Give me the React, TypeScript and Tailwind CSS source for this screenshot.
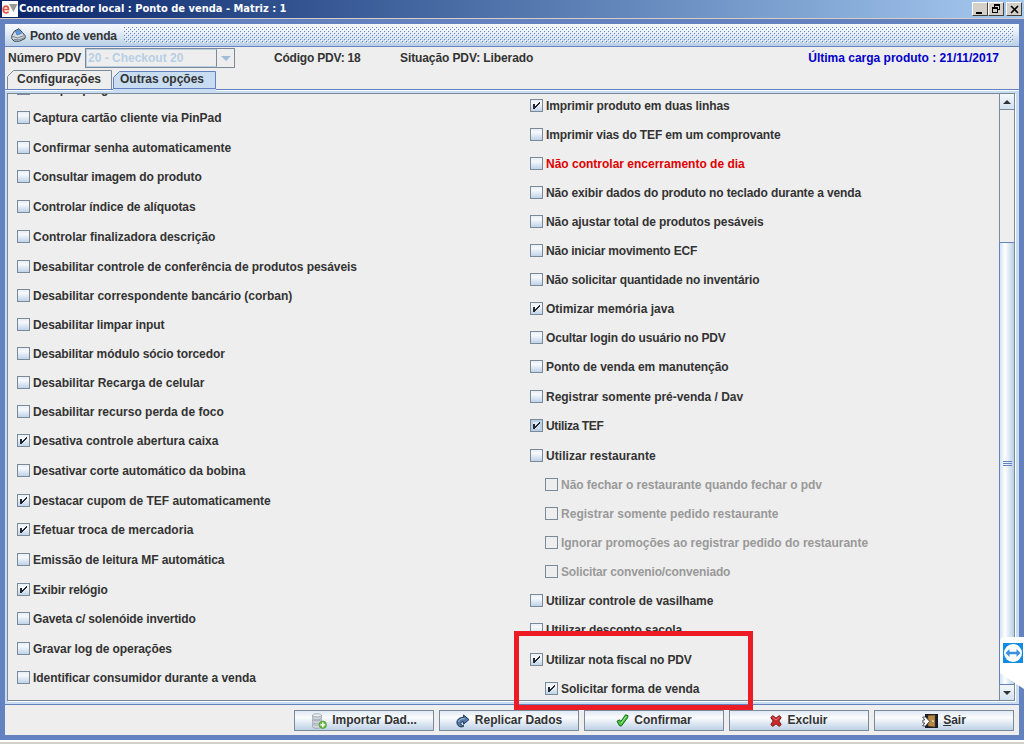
import React from 'react';

type Option = { label: string; h: 29 | 30; on?: boolean; off?: boolean; red?: boolean; sub?: boolean; hot?: boolean; track?: string };

const left: Option[] = [
  { label: 'Compor pergunta', h: 29, track: 'leading-[12px]' },
  { label: 'Captura cartão cliente via PinPad', h: 30, track: 'tracking-[-0.05px]' },
  { label: 'Confirmar senha automaticamente', h: 29, track: 'tracking-[0.03px]' },
  { label: 'Consultar imagem do produto', h: 30, track: 'tracking-[-0.1px]' },
  { label: 'Controlar índice de alíquotas', h: 30, track: 'tracking-[-0.1px]' },
  { label: 'Controlar finalizadora descrição', h: 30, track: 'tracking-[-0.03px]' },
  { label: 'Desabilitar controle de conferência de produtos pesáveis', h: 29, track: 'tracking-[-0.05px]' },
  { label: 'Desabilitar correspondente bancário (corban)', h: 29, track: 'tracking-[-0.02px]' },
  { label: 'Desabilitar limpar input', h: 29, track: 'tracking-[-0.08px]' },
  { label: 'Desabilitar módulo sócio torcedor', h: 29, track: 'tracking-[-0.09px]' },
  { label: 'Desabilitar Recarga de celular', h: 29 },
  { label: 'Desabilitar recurso perda de foco', h: 29 },
  { label: 'Desativa controle abertura caixa', h: 30, on: true, track: 'tracking-[0.02px]' },
  { label: 'Desativar corte automático da bobina', h: 30, track: 'tracking-[-0.05px]' },
  { label: 'Destacar cupom de TEF automaticamente', h: 29, on: true, track: 'tracking-[-0.03px]' },
  { label: 'Efetuar troca de mercadoria', h: 30, on: true, track: 'tracking-[0.04px]' },
  { label: 'Emissão de leitura MF automática', h: 30, track: 'tracking-[-0.06px]' },
  { label: 'Exibir relógio', h: 29, on: true, track: 'tracking-[-0.15px]' },
  { label: 'Gaveta c/ solenóide invertido', h: 30, track: 'tracking-[-0.14px]' },
  { label: 'Gravar log de operações', h: 29, track: 'tracking-[-0.08px]' },
  { label: 'Identificar consumidor durante a venda', h: 29, track: 'tracking-[-0.05px]' },
];

const right: Option[] = [
  { label: 'Imprimir produto em duas linhas', h: 29, on: true, track: 'tracking-[-0.1px]' },
  { label: 'Imprimir vias do TEF em um comprovante', h: 29, track: 'tracking-[-0.13px]' },
  { label: 'Não controlar encerramento de dia', h: 29, red: true },
  { label: 'Não exibir dados do produto no teclado durante a venda', h: 29, track: 'tracking-[-0.13px]' },
  { label: 'Não ajustar total de produtos pesáveis', h: 29, track: 'tracking-[-0.08px]' },
  { label: 'Não iniciar movimento ECF', h: 29, track: 'tracking-[-0.2px]' },
  { label: 'Não solicitar quantidade no inventário', h: 29, track: 'tracking-[-0.12px]' },
  { label: 'Otimizar memória java', h: 29, on: true },
  { label: 'Ocultar login do usuário no PDV', h: 29, track: 'tracking-[-0.16px]' },
  { label: 'Ponto de venda em manutenção', h: 30, track: 'tracking-[-0.05px]' },
  { label: 'Registrar somente pré-venda / Dav', h: 29, track: 'tracking-[-0.03px]' },
  { label: 'Utiliza TEF', h: 30, on: true, hot: true, track: 'tracking-[-0.35px]' },
  { label: 'Utilizar restaurante', h: 29, track: 'tracking-[0.05px]' },
  { label: 'Não fechar o restaurante quando fechar o pdv', h: 29, off: true, sub: true, track: 'tracking-[-0.04px]' },
  { label: 'Registrar somente pedido restaurante', h: 29, off: true, sub: true, track: 'tracking-[0.02px]' },
  { label: 'Ignorar promoções ao registrar pedido do restaurante', h: 29, off: true, sub: true, track: 'tracking-[-0.02px]' },
  { label: 'Solicitar convenio/conveniado', h: 29, off: true, sub: true, track: 'tracking-[-0.14px]' },
  { label: 'Utilizar controle de vasilhame', h: 29, track: 'tracking-[-0.07px]' },
  { label: 'Utilizar desconto sacola', h: 30, track: 'tracking-[-0.05px]' },
  { label: 'Utilizar nota fiscal no PDV', h: 29, on: true, track: 'tracking-[-0.11px]' },
  { label: 'Solicitar forma de venda', h: 29, on: true, sub: true, track: 'tracking-[-0.04px]' },
];

function Check({ on, off, hot }: Option) {
  const fill = off
    ? 'bg-[#eeeeee]'
    : hot
      ? 'bg-linear-to-b from-[#e4eef8] to-[#c3d6ea] shadow-[inset_0_0_0_2px_#b8cfe5]'
      : 'bg-linear-to-b from-[#e6eef7] via-[#f6f9fc] via-30% to-[#bfd3e8]';
  return (
    <span className={`block h-[13px] w-[13px] shrink-0 border border-[#7a8a99] ${fill}`}>
      {on && (
        <svg width="11" height="11" viewBox="0 0 11 11" shapeRendering="crispEdges">
          <path d="M2 4h2v5H2z M4 6h1v2H4z M5 5h1v2H5z M6 4h1v2H6z M7 3h1v2H7z M8 2h1v2H8z" fill="#26292f" />
        </svg>
      )}
    </span>
  );
}

function Row(o: Option) {
  return (
    <div className={`flex items-start gap-[3px] ${o.h === 30 ? 'h-[30px]' : 'h-[29px]'} ${o.sub ? 'pl-[15px]' : ''}`}>
      <Check {...o} />
      <span className={`leading-[15px] whitespace-nowrap ${o.track ?? ''} ${o.red ? 'text-[#e00000]' : o.off ? 'text-[#999999]' : ''}`}>{o.label}</span>
    </div>
  );
}

function Button({ children }: { children: React.ReactNode }) {
  return (
    <button className="flex h-[21px] w-[140px] items-center justify-center gap-[5px] border border-[#7a8a99] bg-linear-to-b from-[#dfe9f4] via-[#fbfcfe] via-35% to-[#bdd1e6] leading-[19px] font-bold">
      {children}
    </button>
  );
}

const DatabaseIcon = () => (
  <svg width="16" height="16" viewBox="0 0 16 16">
    <g fill="#cfd5da" stroke="#8d99a3" strokeWidth="0.7">
      <path d="M1.5 10.5v3c0 2.6 9 2.6 9 0v-3z" />
      <ellipse cx="6" cy="10.5" rx="4.5" ry="1.5" fill="#eef1f3" />
      <path d="M1.5 6.5v2.5c0 2.4 9 2.4 9 0V6.5z" />
      <ellipse cx="6" cy="6.3" rx="4.5" ry="1.5" fill="#eef1f3" />
      <path d="M1.5 2.5v2.500c0 2.400 9 2.400 9 0V2.500z" />
      <ellipse cx="6" cy="2.3" rx="4.5" ry="1.6" fill="#eef1f3" />
    </g>
    <circle cx="11.800" cy="11.800" r="3.700" fill="#6cba45" stroke="#4a9a2a" strokeWidth="0.7" />
    <path d="M11.800 9.400v4.800M9.400 11.800h4.800" stroke="#fff" strokeWidth="1.500" />
  </svg>
);

const RedoIcon = () => (
  <svg width="14" height="14" viewBox="0 0 14 14">
    <path d="M7.600 1l5.400 4.600-5.400 4.600V7.700C5.200 7.800 4.300 9 5 10.300c.5 1 1.700 1.500 3 1.500-.8 1-2.500 1.500-4.200.8C1 11.500.3 8.500 1.500 6.200 2.600 4.200 4.800 3.300 7.600 3.300z" fill="#5379a8" stroke="#1f3552" />
    <path d="M2.600 8c.6-2.500 2.500-3.400 6-3.300" fill="none" stroke="#a9c4e4" />
  </svg>
);

const ConfirmIcon = () => (
  <svg width="13" height="13" viewBox="0 0 13 13">
    <path d="M1 7.300l2.600-1.500 1.300 1.700L9.500.8l2.500.8-.3 2L5.200 12.200 3.400 11.500z" fill="#43c63c" stroke="#17651a" strokeLinejoin="round" />
    <path d="M4.800 9.500L10.300 2.300" stroke="#a5f09a" />
  </svg>
);

const DeleteIcon = () => (
  <svg width="12" height="12" viewBox="0 0 12 12">
    <path d="M.8 2.500L2.800.6 6 3.200 9.200.6l2 1.900L8.800 6l2.400 3.500-2 1.900L6 8.800l-3.200 2.600-2-1.900L3.200 6z" fill="#cf2a2a" stroke="#741010" strokeLinejoin="round" />
    <path d="M2.600 2.300L6 5 9.300 2.300" fill="none" stroke="#ee7777" />
  </svg>
);

const ExitIcon = () => (
  <svg width="16" height="14" viewBox="0 0 16 14">
    <path d="M3 0h13v14H3z" fill="#151c2c" />
    <path d="M6 1.500l7-.5v12l-7-1z" fill="#b98a45" stroke="#6b4818" strokeWidth=".6" />
    <path d="M10 7h2" stroke="#fff" />
    <path d="M.6 3h3L7.600 7.300 3.600 12H.6L2.800 9H.9V6h1.900z" fill="#fff" stroke="#333" strokeWidth=".8" />
  </svg>
);

const PosIcon = () => (
  <svg width="15" height="14" viewBox="0 0 15 14">
    <path d="M3.500 3L8 .7l3.500 3.800 2.700 3.300-.2 2.700-5.500 2.700H3L.8 10.500V7.700z" fill="#d3dbe2" stroke="#35404b" />
    <path d="M4.500 3.500L8 2l2.700 3.300L6 7z" fill="#5b9ae8" stroke="#2d5f9e" strokeWidth=".6" />
    <path d="M1.500 8.300l5 1.700 6.500-2.300M3 11.500l5 .3 5-2" fill="none" stroke="#78838d" />
  </svg>
);

const winBtn = 'flex h-[14px] w-[16px] items-center justify-center border border-t-white border-l-white border-r-[#404040] border-b-[#404040] bg-[#d4d0c8]';
const arrowBox = 'flex shrink-0 items-center justify-center bg-linear-to-b from-[#f4f8fc] to-[#d3e1ef]';

export default function App() {
  return (
    <div className="relative flex h-[754px] w-[1024px] flex-col overflow-hidden bg-white font-['Liberation_Sans',Arial,sans-serif] text-[12px] font-bold text-[#333333]">
      <header className="flex h-[18px] shrink-0 items-center bg-linear-to-r from-[#0a246a] to-[#a6caf0] px-[2px] text-white">
        <svg width="16" height="16" viewBox="0 0 16 16">
          <path d="M0 0h16v16H0z" fill="#fff" />
          <path d="M1.200 8.500h5.300C6.500 4 1.200 4 1.200 8.500c0 4 4 4 5.300 2.300" fill="none" stroke="#e4523e" strokeWidth="1.700" />
          <path d="M7 3h8.500l-4 8z" fill="#999" />
        </svg>
        <span className="ml-px font-['DejaVu_Sans_Condensed','DejaVu_Sans',sans-serif] text-[11px] leading-[18px] whitespace-nowrap">Concentrador local : Ponto de venda - Matriz : 1</span>
        <div className="ml-auto flex">
          <div className={winBtn}><svg width="10" height="10"><path d="M1 8h6v2H1z" fill="#000" /></svg></div>
          <div className={winBtn}>
            <svg width="10" height="10" viewBox="0 0 10 10" shapeRendering="crispEdges">
              <path d="M3 0h6v2H3z M8 2h1v4H8z M7 5h1v1H7z M3 2h1v1H3z M1 3h6v2H1z M1 5h1v4H1z M6 5h1v4H6z M2 8h4v1H2z" fill="#000" />
            </svg>
          </div>
          <div className={`${winBtn} ml-[2px]`}><svg width="9" height="9" viewBox="0 0 9 9"><path d="M1 1l7 7M8 1L1 8" stroke="#000" strokeWidth="1.600" /></svg></div>
        </div>
      </header>
      <div className="h-px shrink-0 bg-[#d4d0c8]" />

      <div className="flex h-[721px] shrink-0 flex-col border-[5px] border-[#6382bf] bg-[#eeeeee]">
        <div className="flex h-[23px] shrink-0 items-center rounded-t-[2px] border-b border-[#6382bf] bg-linear-to-b from-[#f6f9fd] via-[#eaf1f9] via-30% to-[#b8cfe5] px-[6px]">
          <PosIcon />
          <span className="ml-[4px] w-[94px] pt-px tracking-[-0.18px] whitespace-nowrap">Ponto de venda</span>
          <svg className="h-[16px] w-[889px]" shapeRendering="crispEdges">
            <defs>
              <pattern id="bumps" width="4" height="4" patternUnits="userSpaceOnUse">
                <path d="M0 0h1v1H0zM2 2h1v1H2z" fill="#6382bf" />
                <path d="M1 1h1v1H1zM3 3h1v1H3z" fill="#fff" />
              </pattern>
            </defs>
            <rect width="889" height="16" fill="url(#bumps)" />
          </svg>
        </div>

        <div className="flex h-[23px] shrink-0 items-start pt-px pl-[3px]">
          <span className="w-[77px] leading-[20px] whitespace-nowrap">Número PDV</span>
          <div className="flex h-[20px] w-[150px] border border-[#7a8a99] text-[#b8cfe5]">
            <div className="w-[131px] border border-[#b8cfe5] border-r-[#7a8a99] pl-px leading-[17px]">20 - Checkout 20</div>
            <div className="flex flex-1 items-center justify-center"><svg width="10" height="5"><path d="M0 0h10L5 5z" fill="#a3bcdb" /></svg></div>
          </div>
          <span className="ml-[39px] w-[126px] leading-[20px] tracking-[-0.2px] whitespace-nowrap">Código PDV: 18</span>
          <span className="leading-[20px] tracking-[-0.1px] whitespace-nowrap">Situação PDV: Liberado</span>
          <span className="mr-[20px] ml-auto leading-[20px] whitespace-nowrap text-[#0000c8]">Última carga produto : 21/11/2017</span>
        </div>

        <nav className="relative z-10 flex h-[19px] shrink-0 gap-px pl-[2px]">
          <div className="relative h-[19px] w-[105px] pl-[10px] leading-[19px] whitespace-nowrap">
            <svg className="absolute top-0 left-0" width="105" height="19">
              <path d="M.5 19V6.500L6.500.5h98V19" fill="#eeeeee" stroke="#7a8a99" />
            </svg>
            <span className="relative">Configurações</span>
          </div>
          <div className="relative h-[23px] w-[103px] pl-[7px] leading-[19px] whitespace-nowrap">
            <svg className="absolute top-0 left-0" width="103" height="23">
              <path d="M0 23V7.500L6 1.500h97V23z" fill="#c8ddf2" />
              <path d="M.5 19V7.500L6.500 1.500h96V19M0 18.500h103" fill="none" stroke="#6382bf" />
            </svg>
            <span className="relative">Outras opções</span>
          </div>
        </nav>

        <div className="flex h-[616px] shrink-0 flex-col border-t border-b border-[#6382bf] bg-[#c8ddf2] pt-[3px] pr-[4px] pb-[3px] pl-[2px] shadow-[inset_0_1px_0_#fff]">
          <div className="flex min-h-0 flex-1 border border-[#7a8a99] bg-[#eeeeee] shadow-[1px_1px_0_#fff]">
            <div className="flex min-w-0 flex-1 items-start overflow-hidden pl-[9px]">
              <div className="-mt-[12px] flex w-[513px] shrink-0 flex-col">{left.map((o) => <Row key={o.label} {...o} />)}</div>
              <div className="flex flex-col pt-[5px]">{right.map((o) => <Row key={o.label} {...o} />)}</div>
            </div>
            <div className="flex w-[15px] shrink-0 flex-col border-l border-[#7a8a99]">
              <div className={`${arrowBox} h-[15px]`}><svg width="8" height="4"><path d="M0 4L4 0l4 4z" fill="#333" /></svg></div>
              <div className="h-[133px] border-t border-[#7a8a99] bg-[#eeeeee]" />
              <div className="-ml-px flex flex-1 flex-col items-center border border-r-0 border-[#6382bf] bg-linear-to-r from-[#d3e2f1] via-white via-35% to-[#b8cfe5] pt-[218px]">
                <div className="flex w-[9px] flex-col gap-px"><i className="h-px bg-[#6382bf]" /><i className="h-px bg-[#6382bf]" /><i className="h-px bg-[#6382bf]" /></div>
              </div>
              <div className={`${arrowBox} h-[15px]`}><svg width="8" height="4"><path d="M0 0h8L4 4z" fill="#333" /></svg></div>
            </div>
          </div>
        </div>

        <footer className="flex flex-1 items-start justify-end gap-[5px] pt-[5px] pr-[5px]">
          <Button><DatabaseIcon />Importar Dad...</Button>
          <Button><RedoIcon />Replicar Dados</Button>
          <Button><ConfirmIcon />Confirmar</Button>
          <Button><DeleteIcon />Excluir</Button>
          <Button><ExitIcon /><span><u>S</u>air</span></Button>
        </footer>
      </div>
      <div className="mt-[2px] h-[2px] shrink-0 bg-[#d4d0c8]" />

      <div className="absolute top-[631px] left-[514px] z-20 h-[79px] w-[239px] border-[5px] border-[#ed1c24]" />
      <svg className="absolute top-[637px] left-[999px] z-20" width="25" height="54" viewBox="0 0 25 54">
        <path d="M25 0H6Q1 0 1 5v31l24 16z" fill="#fff" />
        <path d="M4 6h20v20H4z" fill="#128be0" />
        <circle cx="14" cy="16" r="9" fill="#fff" />
        <path d="M6.500 16l4-4v2.700h7V12l4 4-4 4v-2.700h-7V20z" fill="#3d8fe0" />
      </svg>
    </div>
  );
}
